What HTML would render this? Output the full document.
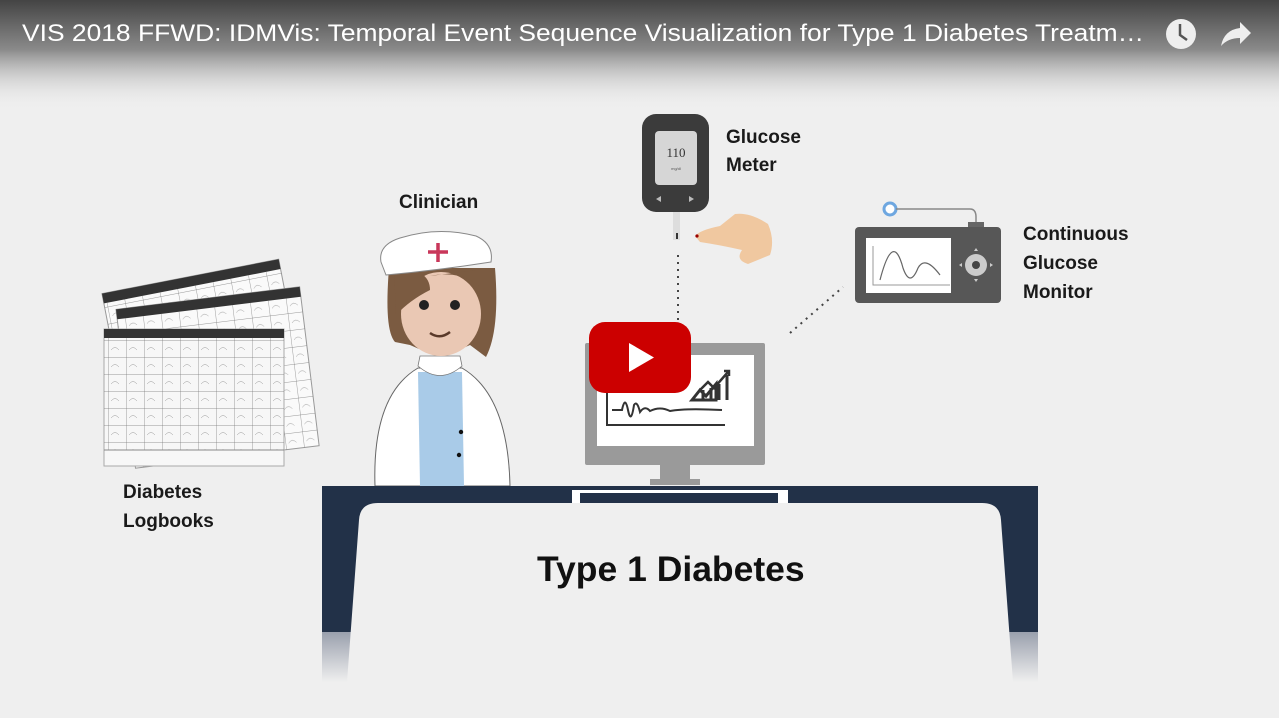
<!DOCTYPE html>
<html><head><meta charset="utf-8"><style>
html,body{margin:0;padding:0;width:1279px;height:718px;overflow:hidden;background:#efefef}
.t{position:absolute;font-family:"Liberation Sans",sans-serif;color:#1a1a1a}
.l{font-weight:bold;font-size:19px}
</style></head><body>
<svg width="1279" height="718" style="position:absolute;left:0;top:0" xmlns="http://www.w3.org/2000/svg">
<defs>
<linearGradient id="top" x1="0" y1="0" x2="0" y2="1">
<stop offset="0" stop-color="#444"/><stop offset="0.45" stop-color="#8a8a8a"/><stop offset="1" stop-color="#efefef" stop-opacity="0"/>
</linearGradient>
<linearGradient id="fade" x1="0" y1="0" x2="0" y2="1">
<stop offset="0" stop-color="#9aa0ad"/><stop offset="1" stop-color="#efefef"/>
</linearGradient>
<pattern id="grid" width="18" height="17" patternUnits="userSpaceOnUse">
<path d="M0 0H18M0 0V17" stroke="#777" stroke-width="0.7" fill="none"/>
<path d="M3 10q4-5 8 0" stroke="#999" stroke-width="0.5" fill="none"/>
</pattern>
</defs>
<rect width="1279" height="718" fill="#efefef"/>
<rect width="1279" height="110" fill="url(#top)"/>

<g transform="rotate(-11 200 300)">
<rect x="105" y="275" width="180" height="160" fill="#fafafa" stroke="#999"/>
<rect x="105" y="275" width="180" height="10" fill="#333"/>
<rect x="105" y="285" width="180" height="150" fill="url(#grid)"/>
</g>
<g transform="rotate(-7 210 320)">
<rect x="118" y="298" width="185" height="160" fill="#fafafa" stroke="#999"/>
<rect x="118" y="298" width="185" height="10" fill="#333"/>
<rect x="118" y="308" width="185" height="150" fill="url(#grid)"/>
</g>
<rect x="104" y="329" width="180" height="137" fill="#f7f7f7" stroke="#aaa"/>
<rect x="104" y="329" width="180" height="9" fill="#333"/>
<rect x="104" y="338" width="180" height="112" fill="url(#grid)"/>
<line x1="104" y1="450" x2="284" y2="450" stroke="#888"/>

<path d="M375 486 Q372 395 418 368 L462 368 Q508 395 510 486 Z" fill="#fff" stroke="#666" stroke-width="1"/>
<path d="M418 372 L462 372 L464 486 L420 486 Z" fill="#a9cbe8"/>
<path d="M418 366 Q440 385 462 366 L460 356 L420 356 Z" fill="#fff" stroke="#777" stroke-width="0.8"/>
<circle cx="461" cy="432" r="2.2" fill="#111"/><circle cx="459" cy="455" r="2.2" fill="#111"/>
<path d="M389 268 Q384 330 395 342 L410 345 Q440 360 470 345 L486 357 Q500 330 495 268 Z" fill="#7b5b41"/>
<ellipse cx="441" cy="314" rx="40" ry="42" fill="#eac8b4"/>
<path d="M394 268 Q430 268 430 290 Q410 300 396 315 Z" fill="#7b5b41"/>
<path d="M430 276 Q470 268 492 300 L492 268 Z" fill="#7b5b41"/>
<circle cx="424" cy="305" r="5" fill="#222"/><circle cx="455" cy="305" r="5" fill="#222"/>
<path d="M430 333 Q440 340 450 332" stroke="#5a3a2a" stroke-width="2.5" fill="none"/>
<path d="M381 262 Q378 245 400 238 Q438 226 476 236 Q494 244 491 262 Q440 270 386 275 Z" fill="#fff" stroke="#888"/>
<path d="M438 243v19M428 252h20" stroke="#c9375a" stroke-width="3.5"/>

<rect x="642" y="114" width="67" height="98" rx="14" fill="#3b3b3b"/>
<rect x="655" y="131" width="42" height="54" rx="4" fill="#d6d6d6"/>
<text x="676" y="157" font-family="Liberation Serif,serif" font-size="13" fill="#333" text-anchor="middle">110</text>
<text x="676" y="170" font-family="Liberation Sans,sans-serif" font-size="4" fill="#555" text-anchor="middle">mg/dl</text>
<path d="M661 196l-5 3 5 3zM689 196l5 3-5 3z" fill="#bbb"/>
<rect x="673" y="212" width="7" height="28" fill="#ddd"/>
<rect x="676" y="233" width="2" height="6" fill="#333"/>
<path d="M695 236 Q700 230 720 226 L735 214 Q750 212 768 224 Q775 240 770 255 L748 264 Q735 260 742 250 Q720 245 700 242 Z" fill="#f0c8a0"/>
<circle cx="697" cy="236" r="1.6" fill="#900"/>
<path d="M678 255V322" stroke="#444" stroke-width="2" stroke-dasharray="2 5"/>
<path d="M790 333L843 287" stroke="#444" stroke-width="2" stroke-dasharray="2 5"/>

<circle cx="890" cy="209" r="6" fill="#fff" stroke="#6ea7e0" stroke-width="3"/>
<path d="M896 209H970q6 0 6 8v6" stroke="#888" stroke-width="1.5" fill="none"/>
<rect x="968" y="222" width="16" height="6" fill="#666"/>
<rect x="855" y="227" width="146" height="76" rx="4" fill="#575757"/>
<rect x="866" y="238" width="85" height="55" fill="#fff"/>
<path d="M873 246V285H950" stroke="#999" fill="none"/>
<path d="M880 280 Q893 230 903 268 Q910 288 918 268 Q925 255 940 275" stroke="#666" fill="none" stroke-width="1.2"/>
<circle cx="976" cy="265" r="11" fill="#ccc"/><circle cx="976" cy="265" r="4" fill="#444"/>
<path d="M976 248l-2 3h4zM976 282l-2-3h4zM959 265l3-2v4zM993 265l-3-2v4z" fill="#ccc"/>

<rect x="585" y="343" width="180" height="122" rx="2" fill="#9a9a9a"/>
<rect x="597" y="355" width="157" height="91" fill="#fff"/>
<rect x="660" y="465" width="30" height="15" fill="#9a9a9a"/>
<rect x="650" y="479" width="50" height="6" fill="#9a9a9a"/>
<path d="M607 390V425H725" stroke="#333" stroke-width="2" fill="none"/>
<path d="M612 410H622 Q625 395 628 410 Q631 425 634 405 Q637 400 640 412 Q645 405 650 411 Q660 406 670 411 Q685 408 722 410" stroke="#333" stroke-width="2" fill="none"/>
<path d="M692 400l8-10 6 6 10-12v16h-24zM703 400v-10M711 400v-12M719 400v-16M727 400v-25" stroke="#333" stroke-width="3" fill="none"/>
<path d="M700 390l8-8 6 6 14-16M724 371h5v5" stroke="#333" stroke-width="2.5" fill="none"/>

<rect x="322" y="486" width="716" height="147" fill="#223148"/>
<rect x="322" y="632" width="716" height="50" fill="url(#fade)"/>
<rect x="572" y="490" width="216" height="15" fill="#fff"/>
<rect x="580" y="493" width="198" height="10" fill="#223148"/>
<path d="M378 503 H982 Q1000 503 1001 520 L1013 682 H347 L359 520 Q360 503 378 503 Z" fill="#efefef"/>

<rect x="589" y="322" width="102" height="71" rx="16" fill="#cc0000"/>
<path d="M629 343v29l25-14.5z" fill="#fff"/>

<circle cx="1181" cy="34" r="15" fill="#eee"/>
<path d="M1180 24v11l7 5" stroke="#555" stroke-width="2.5" fill="none"/>
<path d="M1221 46 Q1224 30 1240 28 V22 L1251 33 L1240 44 V38 Q1228 38 1221 46 Z" fill="#eee"/>
</svg>

<div class="t" style="left:22px;top:20px;font-size:24px;color:#fff;white-space:nowrap;transform:scaleX(1.1);transform-origin:0 0">VIS 2018 FFWD: IDMVis: Temporal Event Sequence Visualization for Type 1 Diabetes Treatm…</div>
<div class="t l" style="left:726px;top:124px;line-height:28px">Glucose<br>Meter</div>
<div class="t l" style="left:399px;top:192px">Clinician</div>
<div class="t l" style="left:1023px;top:220px;line-height:29px">Continuous<br>Glucose<br>Monitor</div>
<div class="t l" style="left:123px;top:478px;line-height:29px">Diabetes<br>Logbooks</div>
<div class="t" style="left:537px;top:549px;font-size:35.5px;font-weight:bold;color:#111">Type 1 Diabetes</div>
</body></html>
